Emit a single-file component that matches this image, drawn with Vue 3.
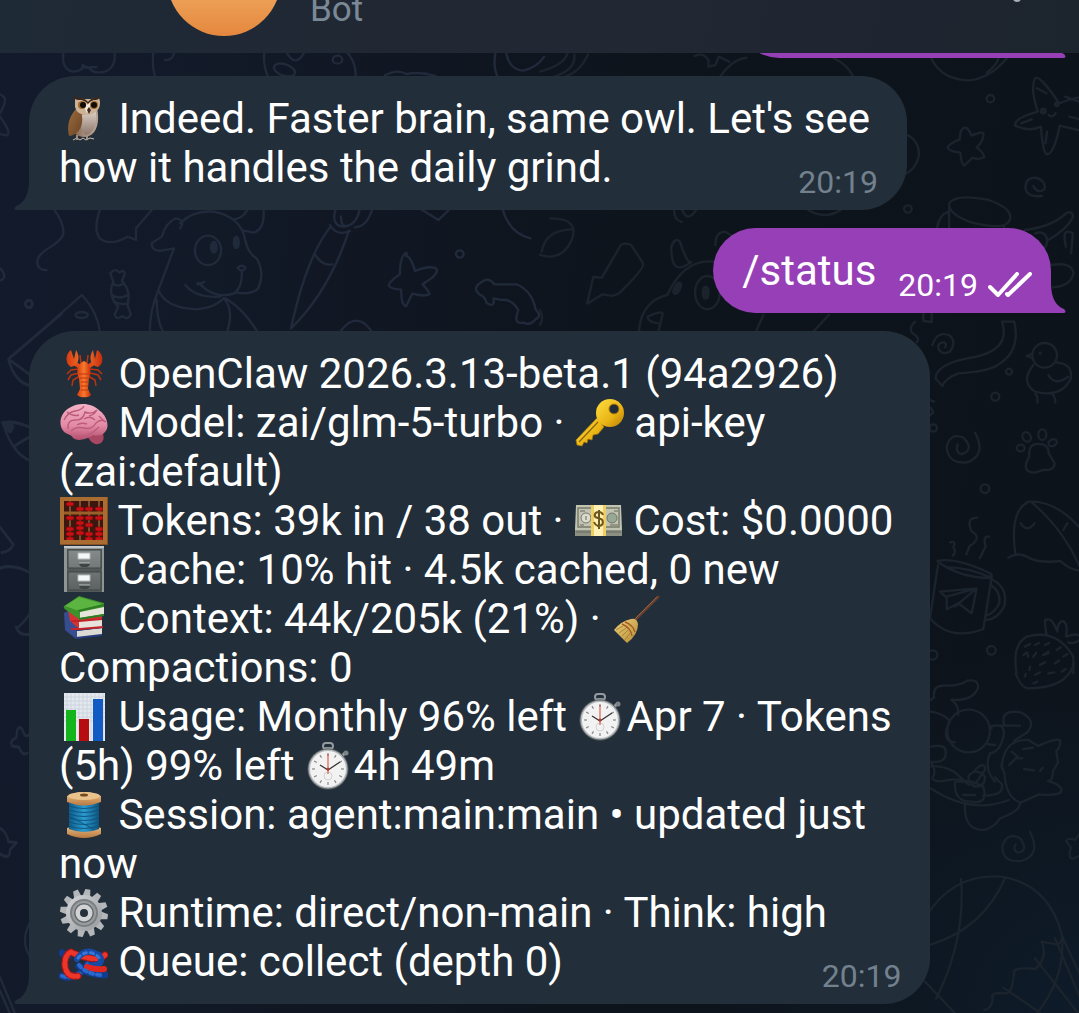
<script setup>
const reply = [
  [{ icon: 'owl' }, " Indeed. Faster brain, same owl. Let's see"],
  ['how it handles the daily grind.'],
]

const status = [
  [{ icon: 'lobster' }, ' OpenClaw 2026.3.13-beta.1 (94a2926)'],
  [{ icon: 'brain' }, ' Model: zai/glm-5-turbo · ', { icon: 'key' }, ' api-key'],
  ['(zai:default)'],
  [{ icon: 'abacus' }, ' Tokens: 39k in / 38 out · ', { icon: 'cash' }, ' Cost: $0.0000'],
  [{ icon: 'cabinet' }, ' Cache: 10% hit · 4.5k cached, 0 new'],
  [{ icon: 'books' }, ' Context: 44k/205k (21%) · ', { icon: 'broom' }],
  ['Compactions: 0'],
  [{ icon: 'chart' }, ' Usage: Monthly 96% left ', { icon: 'watch' }, 'Apr 7 · Tokens'],
  ['(5h) 99% left ', { icon: 'watch' }, '4h 49m'],
  [{ icon: 'spool' }, ' Session: agent:main:main • updated just'],
  ['now'],
  [{ icon: 'gear' }, ' Runtime: direct/non-main · Think: high'],
  [{ icon: 'knot' }, ' Queue: collect (depth 0)'],
]

const messages = [
  { id: 1, side: 'out', lines: [], time: '' },
  { id: 2, side: 'in', lines: reply, time: '20:19' },
  { id: 3, side: 'out', lines: [['/status']], time: '20:19' },
  { id: 4, side: 'in', lines: status, time: '20:19' },
]

const teeth = Array.from({ length: 12 }, (_, i) => i * 30)
const ticks = Array.from({ length: 12 }, (_, i) => i * 30)
</script>

<template>
  <div class="app">
    <svg class="sprite" aria-hidden="true">
      <defs>
        <linearGradient id="gOwl" x1="0" x2="1"><stop offset="0" stop-color="#7a5232" /><stop offset=".5" stop-color="#a08878" /><stop offset="1" stop-color="#b9a698" /></linearGradient>
        <linearGradient id="gBelly" x1="0" y1="0" x2="0" y2="1"><stop offset="0" stop-color="#d8ccc3" /><stop offset="1" stop-color="#8d776a" /></linearGradient>
        <linearGradient id="gWing" x1="0" y1="0" x2="1" y2="1"><stop offset="0" stop-color="#9a6a3c" /><stop offset="1" stop-color="#6a4426" /></linearGradient>
        <linearGradient id="gClaw" x1="0" x2="1"><stop offset="0" stop-color="#d83a10" /><stop offset=".5" stop-color="#f77a2c" /><stop offset="1" stop-color="#c72c0c" /></linearGradient>
        <linearGradient id="gBrain" y2="1" x2="0"><stop offset="0" stop-color="#f5b3c6" /><stop offset=".6" stop-color="#e28aa5" /><stop offset="1" stop-color="#b4506f" /></linearGradient>
        <linearGradient id="gKey" x2="1" y2="1"><stop offset="0" stop-color="#ffdf42" /><stop offset=".6" stop-color="#e9b414" /><stop offset="1" stop-color="#b67a07" /></linearGradient>
        <linearGradient id="gSteel" y2="1" x2="0"><stop offset="0" stop-color="#858a8b" /><stop offset="1" stop-color="#5c6162" /></linearGradient>
        <linearGradient id="gWood" y2="1" x2="0"><stop offset="0" stop-color="#edc48c" /><stop offset="1" stop-color="#b9793f" /></linearGradient>
        <linearGradient id="gThread" x2="1"><stop offset="0" stop-color="#0e5c8a" /><stop offset=".5" stop-color="#2c9bd0" /><stop offset="1" stop-color="#0d5580" /></linearGradient>
        <linearGradient id="gBroom" x2="1" y2="1"><stop offset="0" stop-color="#f0d27c" /><stop offset="1" stop-color="#b58a35" /></linearGradient>
        <linearGradient id="gGear" y2="1" x2="1"><stop offset="0" stop-color="#d5d7d9" /><stop offset="1" stop-color="#96999c" /></linearGradient>
      </defs>

      <symbol id="owl" viewBox="0 0 49 49">
        <path d="M14 46l4-2 3 2 3-2 3 2 4-2 4 1" fill="none" stroke="#c9bfb8" stroke-width="1" />
        <path d="M18 41v5M28 41v4" stroke="#a98a72" stroke-width="2" />
        <path d="M17 15C11 21 9 32 10 41l5-2 5 3q6 2 10 0c8-3 11-15 8-28z" fill="url(#gOwl)" />
        <path d="M23 21c-2 8-1 17 4 20 8-2 11-11 10-23z" fill="url(#gBelly)" />
        <path d="M17 16C9 23 8 33 10 42c10-1 16-12 12-24z" fill="url(#gWing)" />
        <path d="M16 4l9 1h7l8-1q2 5 0 10-4 7-12 7-10 0-12-8z" fill="#cdb298" />
        <path d="M23 6l5 5 6-5 2 1-5 6-3 6-3-6-5-6z" fill="#f2e7da" />
        <path d="M14 2q3 2 8 2 5 1 7 4 2-3 6-4 4 0 6-2 0 3-4 4-5 0-8 4-3-4-9-4-5 0-6-4z" fill="#3d2618" />
        <circle cx="23" cy="11" r="4" fill="#a06a2b" /><circle cx="35" cy="11" r="4" fill="#a06a2b" />
        <circle cx="24" cy="11" r="3" fill="#120c08" /><circle cx="35" cy="11" r="3" fill="#120c08" />
        <path d="M30 13l2 3-2 4-2-4z" fill="#3b2a20" />
      </symbol>

      <symbol id="lobster" viewBox="0 0 49 49">
        <path d="M20 20l-8 1-4 4M20 24l-8 2-3 5M21 27l-7 4-1 6M31 20l8 1 4 4M31 24l8 2 3 5M29 27l7 4 1 6M22 14l-1-8M28 14l1-8" fill="none" stroke="#bd330f" stroke-width="1.5" />
        <path d="M21 18l-7-5M29 18l7-5" stroke="#e84a17" stroke-width="4" />
        <path d="M12 1C6 5 6 15 12 18c9-2 9-11 5-17l-2 9zM38 1c7 4 7 14 1 17-9-2-9-11-5-17l2 9z" fill="url(#gClaw)" />
        <path d="M25 12c-7 3-8 11-5 17l1 11-3 6q4 3 7 2 4 1 7-2l-3-6 1-11c3-6 2-14-5-17z" fill="url(#gClaw)" />
        <path d="M20 25h10M21 29h8M22 33h7M22 37h7M22 41h7" stroke="#c7350f" />
      </symbol>

      <symbol id="brain" viewBox="0 0 49 49">
        <path d="M28 36c2 8 8 11 11 10 6-1 7-7 4-12z" fill="#a84865" />
        <path d="M3 31C-1 23 3 13 12 9c8-5 22-4 29 4 7 5 10 16 5 21-3 4-8 4-12 3-6 4-15 7-20 3-1-4-8-3-11-9z" fill="url(#gBrain)" />
        <path d="M5 22q4-8 11-9t9-5M9 31q-1-9 7-9 8 1 10-8 7 3 12-2M12 33q5-5 13-3t12-5q5-5 10-1M25 21q6-4 11 1M17 38q8 2 16-3l7-6M8 14q6 5 12 3M30 18q5-1 8-6M18 27q4-3 10-1M40 18l5 5" fill="none" stroke="#bc5b7b" stroke-width="1.4" />
      </symbol>

      <symbol id="key" viewBox="0 0 49 49">
        <path d="M22 20L1 42l1 5 5 1 2-4 3 1 1-4 4 1 1-5 5-1 6-7z" fill="url(#gKey)" stroke="#a97808" stroke-width=".7" />
        <circle cx="35" cy="15" r="14" fill="url(#gKey)" />
        <path d="M23 24L4 44" stroke="#8d6306" stroke-width="1.2" />
        <circle cx="39" cy="11" r="5" fill="#222d39" stroke="#b27c08" />
      </symbol>

      <symbol id="cash" viewBox="0 0 49 49">
        <path d="M1 33h47v7H1z" fill="#8d8f83" /><path d="M2 9h45l1 25H1z" fill="#c2c4b2" />
        <path d="M4 12h41v19H4z" fill="none" stroke="#777a69" stroke-width="1.4" />
        <circle cx="12" cy="22" r="5" fill="#d9dbcd" stroke="#74776b" /><circle cx="38" cy="22" r="5" fill="#98a897" stroke="#74776b" />
        <path d="M12 20v4M6 15h5M40 15h4M6 29h4M36 29h8M2 36h45" stroke="#666a5e" />
        <path d="M17 9h15v31H17z" fill="#f0cf61" /><path d="M20 9h9v31h-9z" fill="#fff0b7" />
        <path d="M29 19q-1-3-4-3c-5 0-6 5-1 6 7 1 6 8 0 8q-3-1-4-4M25 14v19" fill="none" stroke="#6c581d" stroke-width="2" />
      </symbol>

      <symbol id="abacus" viewBox="0 0 49 49">
        <path d="M1 1h48v48H1z" fill="#8a4f20" /><path d="M4 4h42v42H4z" fill="#3b1710" />
        <path d="M11 4v42M21 4v42M30 4v42M40 4v42" stroke="#c2854a" />
        <g fill="#c81015" stroke="#750509" stroke-width=".6">
          <rect x="7" y="6" width="8" height="4" rx="2" /><rect x="17" y="11" width="8" height="4" rx="2" /><rect x="26" y="11" width="8" height="4" rx="2" /><rect x="36" y="11" width="8" height="4" rx="2" />
          <rect x="7" y="20" width="8" height="4" rx="2" /><rect x="7" y="31" width="8" height="4" rx="2" /><rect x="7" y="36" width="8" height="4" rx="2" /><rect x="7" y="41" width="8" height="4" rx="2" />
          <rect x="17" y="20" width="8" height="4" rx="2" /><rect x="17" y="25" width="8" height="4" rx="2" /><rect x="17" y="30" width="8" height="4" rx="2" /><rect x="17" y="35" width="8" height="4" rx="2" />
          <rect x="26" y="20" width="8" height="4" rx="2" /><rect x="26" y="27" width="8" height="4" rx="2" /><rect x="26" y="36" width="8" height="4" rx="2" /><rect x="26" y="41" width="8" height="4" rx="2" />
          <rect x="36" y="20" width="8" height="4" rx="2" /><rect x="36" y="31" width="8" height="4" rx="2" /><rect x="36" y="36" width="8" height="4" rx="2" /><rect x="36" y="41" width="8" height="4" rx="2" />
        </g>
        <path d="M3 17h43" stroke="#9b6029" stroke-width="3" /><path d="M3 3h43v43H3z" fill="none" stroke="#a96d31" stroke-width="4" />
      </symbol>

      <symbol id="cabinet" viewBox="0 0 49 49">
        <path d="M5 1h40v46H5z" fill="#8f9494" /><path d="M5 1h40v2H5z" fill="#c3c7c7" /><path d="M8 4h35v43H8z" fill="#535858" />
        <path d="M9 5h33v18H9zM9 27h33v18H9z" fill="url(#gSteel)" stroke="#414646" />
        <path d="M19 8h12v6H19zM19 30h12v6H19z" fill="#f4f7f7" stroke="#b4b9b9" />
        <path d="M20 18h11v1q-1 3-3 3h-5q-2 0-3-3zM20 40h11v1q-1 3-3 3h-5q-2 0-3-3z" fill="#3e4444" /><path d="M20 18h11M20 40h11" stroke="#bac0c0" />
      </symbol>

      <symbol id="books" viewBox="0 0 49 49">
        <path d="M5 19l4-2 8 15 26 0v9l-26 4-11-9z" fill="#364d91" /><path d="M18 37l25-3v7l-25 3z" fill="#dedbd4" /><path d="M17 36l26-3M17 44l26-3" stroke="#263a7a" stroke-width="2" />
        <path d="M9 17l34 3v13l-23 2-9-8z" fill="#d13335" /><path d="M20 27l23-2v8l-23 2z" fill="#e8e2dc" /><path d="M12 27l8 0 23-2M12 35h9l23-2" fill="none" stroke="#c3242a" stroke-width="2" />
        <path d="M5 12L20 2l25 7v11l-25 5L7 16q-3-2-2-4z" fill="#3d922d" /><path d="M6 12L20 3l24 7-24 7z" fill="#5db541" /><path d="M21 18l24-5v7l-24 4z" fill="#e5e5da" /><path d="M19 17l26-6M20 25l25-4" stroke="#2c7e23" stroke-width="2" />
      </symbol>

      <symbol id="broom" viewBox="0 0 49 49">
        <path d="M24 26L47 3" stroke="#633e2c" stroke-width="3" stroke-linecap="round" /><path d="M24 25L46 3" stroke="#94624a" />
        <path d="M20 25q6-1 7 5 0 11-11 19L3 36Q10 27 20 25z" fill="url(#gBroom)" />
        <path d="M14 28q8 3 10 10M11 30q9 4 10 12" fill="none" stroke="#a45d25" stroke-width="1.4" />
        <path d="M5 36l7-4M8 39l7-5M11 42l6-6M14 46l5-7" stroke="#9c7830" stroke-width=".8" />
      </symbol>

      <symbol id="watch" viewBox="0 0 49 49">
        <rect x="18" y="2" width="10" height="6" rx="3" fill="none" stroke="#949b9e" stroke-width="2" /><path d="M20 6h6v6h-6z" fill="#8b9295" /><path d="M36 16l4-4" stroke="#a0a6a8" stroke-width="3" /><circle cx="41" cy="12" r="2.500" fill="#7c8386" />
        <circle cx="23" cy="28" r="20.500" fill="#5b6163" /><circle cx="23" cy="28" r="19.500" fill="#b3b8ba" /><circle cx="23" cy="28" r="18" fill="#f2f2f2" />
        <g stroke="#888" stroke-width="1.2"><path v-for="a in ticks" :key="a" d="M23 12v3" :transform="`rotate(${a} 23 28)`" /></g>
        <circle cx="23" cy="35" r="4" fill="none" stroke="#d3d3d3" />
        <path d="M15 24l8 5 12-8" fill="none" stroke="#333" stroke-width="1.3" /><path d="M23 33V13" stroke="#d5452f" /><circle cx="23" cy="28" r="1.500" fill="#bc3829" />
      </symbol>

      <symbol id="chart" viewBox="0 0 49 49">
        <path d="M5 1h41v48H5z" fill="#e3e9ef" /><path d="M8 1v48M12 1v48M16 1v48M20 1v48M24 1v48M28 1v48M32 1v48M36 1v48M40 1v48M44 1v48M5 5h41M5 9h41M5 13h41M5 17h41M5 21h41M5 25h41M5 29h41" stroke="#c4ced8" stroke-width=".7" />
        <path d="M7 18h10v31H7z" fill="#14b41c" /><path d="M20 27h10v22H20z" fill="#b70d10" /><path d="M34 7h10v42H34z" fill="#135bc4" />
      </symbol>

      <symbol id="spool" viewBox="0 0 49 49">
        <path d="M8 38q17-7 34 0v6q-17 8-34 0z" fill="url(#gWood)" />
        <path d="M10 12h30v27q-15 6-30 0z" fill="url(#gThread)" />
        <path d="M10 16q15 5 30 0M10 20q15 5 30 0M10 24q15 5 30 0M10 28q15 5 30 0M10 32q15 5 30 0M10 36q15 5 30 0M10 26L36 40" fill="none" stroke="#0b5179" stroke-width=".9" />
        <path d="M8 6q17-8 34 0v6q-17 7-34 0z" fill="url(#gWood)" /><ellipse cx="25" cy="6" rx="16" ry="4" fill="#eac28b" /><ellipse cx="25" cy="5" rx="4" ry="1.500" fill="#754b24" />
      </symbol>

      <symbol id="gear" viewBox="0 0 49 49">
        <g fill="#b4b7ba"><path v-for="a in teeth" :key="a" d="M21 9l2-8h5l1 8z" :transform="`rotate(${a + 8} 25 25)`" /></g>
        <circle cx="25" cy="25" r="18" fill="url(#gGear)" /><circle cx="25" cy="25" r="14" fill="#7c8083" /><circle cx="25" cy="25" r="12" fill="#999da0" /><circle cx="25" cy="25" r="10" fill="#64696c" /><circle cx="25" cy="25" r="8.500" fill="#d0d2d4" /><circle cx="25" cy="25" r="4" fill="#25303b" />
      </symbol>

      <symbol id="knot" viewBox="0 0 49 49">
        <g fill="none" stroke-linecap="round" stroke-linejoin="round">
          <path d="M3 16q3 3 6 3M3 39q8 3 15-1t12-13 14-6" stroke="#123c8c" stroke-width="7" />
          <path d="M3 39q8 3 15-1t12-13" stroke="#2b68cc" stroke-width="4" stroke-dasharray="3 4" />
          <path d="M46 18q-5 5-16 3T12 15C4 18 4 34 11 38q4 2 8 1" stroke="#a51515" stroke-width="7" />
          <path d="M46 18q-5 5-16 3T12 15C4 18 4 34 11 38q4 2 8 1" stroke="#ee3529" stroke-width="5" stroke-dasharray="4 3" />
          <path d="M18 22q6-9 15-7 10 3 9 9-1 4-6 4-9 1-10 5" stroke="#164aa5" stroke-width="6" />
          <path d="M19 21q6-7 14-5 8 3 8 8" stroke="#3877da" stroke-width="3" stroke-dasharray="3 4" />
          <path d="M20 29q8 9 26 9" stroke="#123c8c" stroke-width="7" />
          <path d="M28 30q8 3 17 2" stroke="#df271f" stroke-width="6" />
          <path d="M20 28q7 9 22 10" stroke="#2b68cc" stroke-width="4" stroke-dasharray="3 4" />
        </g>
      </symbol>
    </svg>

    <svg class="doodles" viewBox="0 0 1079 1013" preserveAspectRatio="xMidYMin slice" aria-hidden="true">
      <g class="warm" transform="scale(.3444 .3333)">
        <path d="M185 150q-10 60 30 65 28-4 25-20l22 12q10 14 38 9 40-10 32-66M240 203l40-2" />
        <path d="M446 150q-6 45 4 80M505 150q2 32-26 30M768 150q-6 45 12 85M828 150q30 60 56 5M1000 150q34 30 33 80M1118 226q34-20 62-4 40-8 85 6M1440 150q-10 50 5 80M1470 160q10 50 50 52 40-10 60-42" />
        <ellipse cx="826" cy="210" rx="32" ry="17" transform="rotate(20 826 210)" /><ellipse cx="980" cy="179" rx="14" ry="12" />
        <path d="M0 283q24 8 8 40L0 340M0 350q35 50 20 56l-22-4M155 625q35 50 28 80c-13 35-78 45-75 85q4 22 27 20M290 630q-20 60 0 85 30 25 80-5l25 10v-35l50-60" />
        <path d="M523 685q17-25-13-30-30 15-40 55l-30 20q0 25 30 22l35-7-45 125q20 55 110 58 50-3 80-33M523 670q37-40 97-35 80 15 92 85 8 40 33 55 25 45 5 90-20 20-62 13" />
        <ellipse cx="604" cy="751" rx="38" ry="44" /><ellipse class="solid" cx="621" cy="742" rx="8" ry="16" /><ellipse class="solid" cx="686" cy="727" rx="7" ry="17" />
        <path d="M690 803q12-12 23 0-11 18-23 0M702 812q3 48-22 68-40 15-80-10l-25-22q-8 12 18-3M538 855q32 40 102 35M460 870q-25 60-25 125M455 900q0 60 18 95M650 895q30 35 10 100M655 895q55 35 92 100M680 658q25-3 38-28M765 625q5 65-30 73l-27-6" />
        <path d="M320 820q15-18 27-2 15-12 15 5l-8 20q28 30 16 72l10 28q-10 20-25 5-17 15-22-5l10-22q-32-40-14-75zM328 850q15 15 32-2M326 885q20 15 45 0M330 905q25 12 40 5" />
        <path d="M960 680q-70 90-115 305 110-110 168-293M958 675q20 35 58 18M915 765q22 35 50 28M975 625q-15 50 20 55 40 0 50-55M990 650q0 25 12 28M1080 630q-15 50-50 52M1218 625l55 35 30-30" />
        <path d="M1180 768q12 0 25 45 35-15 55-10 20 5-5 30l-28 20q18 20 20 30-15 8-50-2l-18 38q-15-5-14-50-36-3-36-13 0-10 32-33 0-55 19-65zM1400 845q20-15 35 8l65 0q45 20 55 75 20 20 0 30-15 20-35 10-25 5-20-20l5-18q-20-35-50-30l-22-5q5 30-20 14-5-20-20-25-25-20 7-39zM1460 630q20 70 80 85" />
        <path d="M78 1030l160-145q45 50 52 110M990 992q45-60 88 0M0 805q20 20 8 33l-10 5" /><ellipse cx="237" cy="945" rx="18" ry="9" /><circle cx="83" cy="912" r="10" /><circle cx="1335" cy="762" r="11" />
      </g>

      <g class="cool" transform="translate(540) scale(.3438 .3333)">
        <path d="M450 168q25-12 40 12l0 20 20-5 10-25 30 15M525 228q35-50 75-55M855 175q40 20 55 53M1138 175q30 65 110 66 60-5 110-66M1300 218q30-25 33-43M0 215q70-20 80-55M45 228q60-20 55-65M75 228q40-10 65-65M1065 403q40 20 37 65-10 40-40 55M390 630q0 30 22 36M414 630q15 40 40 0M780 630q50 30 95 0" />
        <path d="M1440 235q15-10 70 75 50-20 80-20M1440 235q-15 30 8 100-70 20-66 42 40 20 75 3 5 70 15 82 20 10 40-85l90 22M1445 265l28 15M1400 370l30-12M1470 430l5-35M1480 345q12 10 20-5M1528 290l40 15M1540 350l30 8" /><circle class="solid" cx="1464" cy="333" r="7" /><circle class="solid" cx="1503" cy="313" r="5" />
        <path d="M1230 385q15-8 25 22 35-15 35-5 0 22-20 40 20 15 22 30-15 8-35 2l-22 22q-10 0-12-38-35-5-37-15 0-10 35-25 0-25 9-33zM1460 588q-45 5-48-25 0-30 30-30 32 10 25 35-20 15-32-10" />
        <path d="M1190 610q20-30 115-10 70 25 62 58-10 35-110 10-70-25-67-58zM1190 620v64M1350 680v15M1155 684q5-40 35-50M1410 690q80-10 120-50 20-10 20 12-15 35-75 70M1440 700q30-10 35 20 0 30-25 30M1530 740q-15-60 20-40l-5 60M1487 795q60-10 65 25-10 40-60 42" />
        <circle cx="1310" cy="296" r="11" /><circle cx="1070" cy="627" r="11" />
        <path d="M30 655q90 0 60 70-30 60-90 40M5 755q10-65 88-67M235 735q10-8 30 0l35 55q5 15-70 90l-20 8-28-5-45 28 18-80 25 2zM440 785q-60 50-58-45 10-30 25-15 15 50 30 65M370 885q50-110 135-100M370 885q-75 20-82 107M345 992l12-50q0-12-44 8 0 15 30 20" /><ellipse cx="487" cy="878" rx="36" ry="50" /><ellipse class="solid" cx="482" cy="878" rx="8" ry="18" /><ellipse class="solid" cx="399" cy="865" rx="8" ry="18" transform="rotate(25 399 865)" />
        <path d="M510 735q0-40 30-40l20 15M0 930q12 25 0 45M650 945l-20 45M840 945l-45 50" />
      </g>

      <g class="cool" transform="translate(900 310) scale(.3333)">
        <path d="M45 35q-25 25 0 40 15 10 5 22M70 5v28l25 3V5M97 105q15-45 53-28 20 20 0 48-25 12-34-8-5-20 16-20 10 5 3 15M306 35h37q20 90-50 130-30 20-118 25-40 15-48 38l-20-22q0-40 90-60 140-20 109-111z" />
        <circle cx="434" cy="136" r="37" /><path d="M398 130l-18 8 18 6M400 165q-40 50 5 80 80 20 108-40 5-45-45-48M445 195q20 35 60 5M406 252q8 5 6 26M456 252q10 5 10 26" /><circle cx="421" cy="130" r="2" />
        <circle cx="327" cy="185" r="9" /><circle cx="286" cy="260" r="12" /><circle cx="100" cy="354" r="11" /><circle cx="255" cy="536" r="13" /><circle cx="274" cy="1021" r="13" /><circle cx="98" cy="1035" r="14" />
        <path d="M225 368q35 65-20 88-60 10-65-45 10-45 50-28 35 35-5 50-20-5-12-30M90 270l12 5M90 315l10-8-8-14M388 440q-5-40 30-38 28 0 28 28l18 30q0 22-34 20l-25 8q-45-2-17-48z" />
        <ellipse cx="362" cy="414" rx="12" ry="10" /><ellipse cx="380" cy="381" rx="12" ry="15" transform="rotate(-30 380 381)" /><ellipse cx="427" cy="374" rx="12" ry="16" /><ellipse cx="458" cy="398" rx="13" ry="10" transform="rotate(-25 458 398)" />
        <path d="M346 732q-18-130 40-157 80-5 155 80M395 577q95 80 145 195M325 743q30-20 65 2 35 15 90 8 35 30 60 28M362 640q20 30 42 0M490 660l12-20" />
        <path d="M232 623q-35 0-18 40 35 20-5 45l-10 25M150 697q20-5 10 15 10 15-2 25M267 680q-20-5-10 30l-18 35M114 752q60-10 160 40l-5 12q-90 0-157-50zM114 765L90 925q60 70 160 32l26-160M145 772q60 0 125 30M275 808q50 25 38 80-20 40-55 42M273 825q30 20 25 55-15 30-36 35M120 845l110-10-15 75-40-30-35 18v-35zM140 860l90-25-65 55" />
        <path d="M350 1090q-15-85 30-110 90-25 140 60v50M440 930q-10-10 0 45M440 930q15-10 32 35 0-30 18-32 15 10 8 45M500 980q35-15 45 5-20 20-40 12M375 1010l15-8M405 1005l12-6M435 1005l12-6M370 1035l12-8M400 1040l8-12M430 1035l15-10M470 1020l12-8M490 1040l12-8" />
      </g>

      <g class="cool" transform="translate(900 650) scale(.3333)">
        <path d="M347 70q15 40 35 45 120 0 140-75M385 20l-3-10M400 20l8-10M430 15l15-5M390 50l-2 10M420 45l15-8M465 40l12-8M375 80l2-8M405 75l15-8M445 70l18-3M485 65l12-8M400 100l12-5" />
        <path d="M92 150l10-8q-5-40 40-35 40 0 60-15 35-5 32 22-15 40-80 35 25 20 20 45M92 185q35 5 55 25M92 290q50-10 45 20 0 30-45 25M92 335q20 25 5 50 10 15 50 5 30-5 55 5M92 350q35-5 70 15l45 40" /><circle cx="206" cy="243" r="64" />
        <path d="M150 210q-30 65 15 67M270 230q50-15 40 30-10 45-40 50-20 45 15 85M275 235q-10-10 25-8h60M312 222q-10-45 50-35 50 25 20 60l-40 25M258 282l27 3M92 415q120 80 235 35M165 395q-5 60 50 60 50 10 35-45l-35-15zM205 380q20-30 50 0 0 30-30 30-20-10-20-30zM225 360q30-30 30 0l-28 40M250 437q65 0 55-35l-20-20M190 435h35M195 460q-5 80 55 80 30-5 50-35 60-20 60-45" />
        <path d="M305 355q5-90 80-85l30 18q60-28 66-15 0 20-12 30l5 35-15 25q0 30-15 30 50 15 38 35-20 10-65 5l-55 25q-45-15-48-85l-10-30M335 305l18 15-25 25M345 325h22M370 297l30-4M372 357l30 4M420 363l8-10" />
        <path d="M390 545q35 70-25 88-60 5-58-45 15-45 55-22 25 40-10 42-15-10-5-25M540 550l-15 20q-20-8-27 3l15 20q-10 30 5 34l22-10M78 800q80-130 225-120 140 20 182 170 15 130-75 240M183 687q15 180-75 360M315 685q-65 150-225 200M75 995l90 95M425 875l50 10 15-22M425 875q20 50-20 82-50-5-62 5-5 60-20 68-55-5-45 15 0 30-25 35M405 925l130 165M310 1013l110 75M465 865l80 190M487 860l60 130" />
      </g>

      <g class="warm" transform="translate(0 300) scale(.3333 .4545)">
        <ellipse cx="87" cy="9" rx="11" ry="8" /><path d="M185 30L25 130q20 55 75 60M25 130q30 15 65 35M8 270q35-5 82 10M8 270q30 70 82 83M42 322q20-10 45-20M0 500l40 38q-10 15-35 18M0 590q40-10 90 10M90 690q-35 35-42 30 10 20 42 15M90 955q-15 10-20-5-8-15-18-5l-3 18q-20 5-14 18l22 3q10 20 25 13M0 1162q20 8 25 30l25 2-20 15q0 25-30 10M90 1370q-30 40 0 75M0 1490l45 80M0 1520l30 50" /><path class="solid" d="M8 270q20 0 32 8l-8 12q-12 0-24-20" />
      </g>
    </svg>

    <header class="bar">
      <span class="avatar"></span>
      <span class="subtitle">Bot</span>
      <button class="menu" type="button" aria-label="Menu"></button>
    </header>

    <main class="chat">
      <article v-for="m in messages" :key="m.id" :class="['bubble', m.side, { cut: !m.lines.length }]">
        <svg class="tail" viewBox="0 0 20 30" aria-hidden="true"><path d="M20 0H15C15 15 10 23 2 26Q-1 29 2 30H20z" /></svg>
        <div v-if="m.lines.length" class="text">
          <div v-for="(line, i) in m.lines" :key="i" class="line">
            <template v-for="(part, j) in line" :key="j"><svg v-if="part.icon" class="emoji" role="img" :aria-label="part.icon"><use :href="`#${part.icon}`" /></svg><template v-else>{{ part }}</template></template>
          </div>
        </div>
        <div v-if="m.time" class="meta">
          <time>{{ m.time }}</time>
          <svg v-if="m.side === 'out'" class="ticks" viewBox="0 0 44 26" aria-label="Read"><path d="M2 15l8 8L29 2M19 22l1 1L42 2" /></svg>
        </div>
      </article>
    </main>
  </div>
</template>

<style>
body {
  margin: 0;
  background: #0e151e;
}
</style>

<style scoped>
.app {
  position: relative;
  overflow: hidden;
  min-height: 100vh;
  box-sizing: border-box;
  font-family: Roboto, "Noto Sans", sans-serif;
  color: #fff;
  background:
    radial-gradient(circle at 100% 100%, #0e1b29 0, transparent 25%),
    linear-gradient(95deg, #131a2c 0, #121927 20%, #0e141c 55%, #0d131a 100%);
}
.sprite {
  position: absolute;
  width: 0;
  height: 0;
}
.doodles {
  position: absolute;
  inset: 0;
  width: 100%;
  height: 100%;
  fill: none;
  stroke-width: 7;
  stroke-linecap: round;
  stroke-linejoin: round;
}
.warm {
  stroke: #202a3b;
}
.cool {
  stroke: #1b232c;
}
.warm .solid {
  fill: #202a3b;
}
.cool .solid {
  fill: #1b232c;
}
.bar {
  position: relative;
  display: flex;
  align-items: flex-end;
  height: 53px;
  padding: 0 58px 0 167px;
  overflow: hidden;
  box-sizing: border-box;
  background: linear-gradient(100deg, #1e2a36 0, #212733 45%, #212733 60%, #1c242e 100%);
}
.avatar {
  flex: none;
  width: 114px;
  height: 114px;
  margin: 0 29px 17px 0;
  border-radius: 50%;
  background: linear-gradient(#f3b46b 40%, #e5873e);
}
.subtitle {
  margin-bottom: 23px;
  font-size: 35px;
  line-height: 40px;
  color: #7b8997;
}
.menu {
  width: 8px;
  height: 8px;
  margin: 0 0 51px auto;
  padding: 0;
  border: 0;
  border-radius: 50%;
  background: #a9b0b8;
}
.chat {
  position: relative;
  display: flex;
  flex-direction: column;
  align-items: flex-start;
  gap: 18px;
  padding: 0 28px 9px 29px;
  overflow: hidden;
}
.bubble {
  position: relative;
  display: grid;
  box-sizing: border-box;
  padding: 18px 29px 18px 30px;
  border-radius: 46px;
}
.in {
  border-bottom-left-radius: 0;
  background: #222e39;
  color: #fff;
}
.out {
  align-self: flex-end;
  display: flex;
  align-items: flex-end;
  gap: 22px;
  padding: 18px 19px 18px 29px;
  border-radius: 43px;
  border-bottom-right-radius: 0;
  background: #963fb7;
}
.cut {
  width: 314px;
  height: 85px;
  margin-top: -80px;
}
.text {
  font-size: 42px;
  line-height: 49px;
  white-space: pre;
}
.in .text {
  grid-area: 1 / 1;
  margin-right: 8px;
}
.line {
  height: 49px;
}
.emoji {
  width: 49px;
  height: 49px;
  vertical-align: top;
}
.meta {
  display: flex;
  align-items: center;
  gap: 10px;
  margin-bottom: -8px;
  font-size: 32px;
  line-height: 36px;
}
.in .meta {
  grid-area: 1 / 1;
  align-self: end;
  justify-self: end;
  color: #73818f;
}
.ticks {
  width: 44px;
  height: 26px;
  fill: none;
  stroke: #fff;
  stroke-width: 4;
  stroke-linecap: round;
  stroke-linejoin: round;
}
.tail {
  position: absolute;
  bottom: 0;
  left: -15px;
  width: 20px;
  height: 30px;
  fill: #222e39;
}
.out .tail {
  left: auto;
  right: -15px;
  transform: scaleX(-1);
  fill: #963fb7;
}
</style>
